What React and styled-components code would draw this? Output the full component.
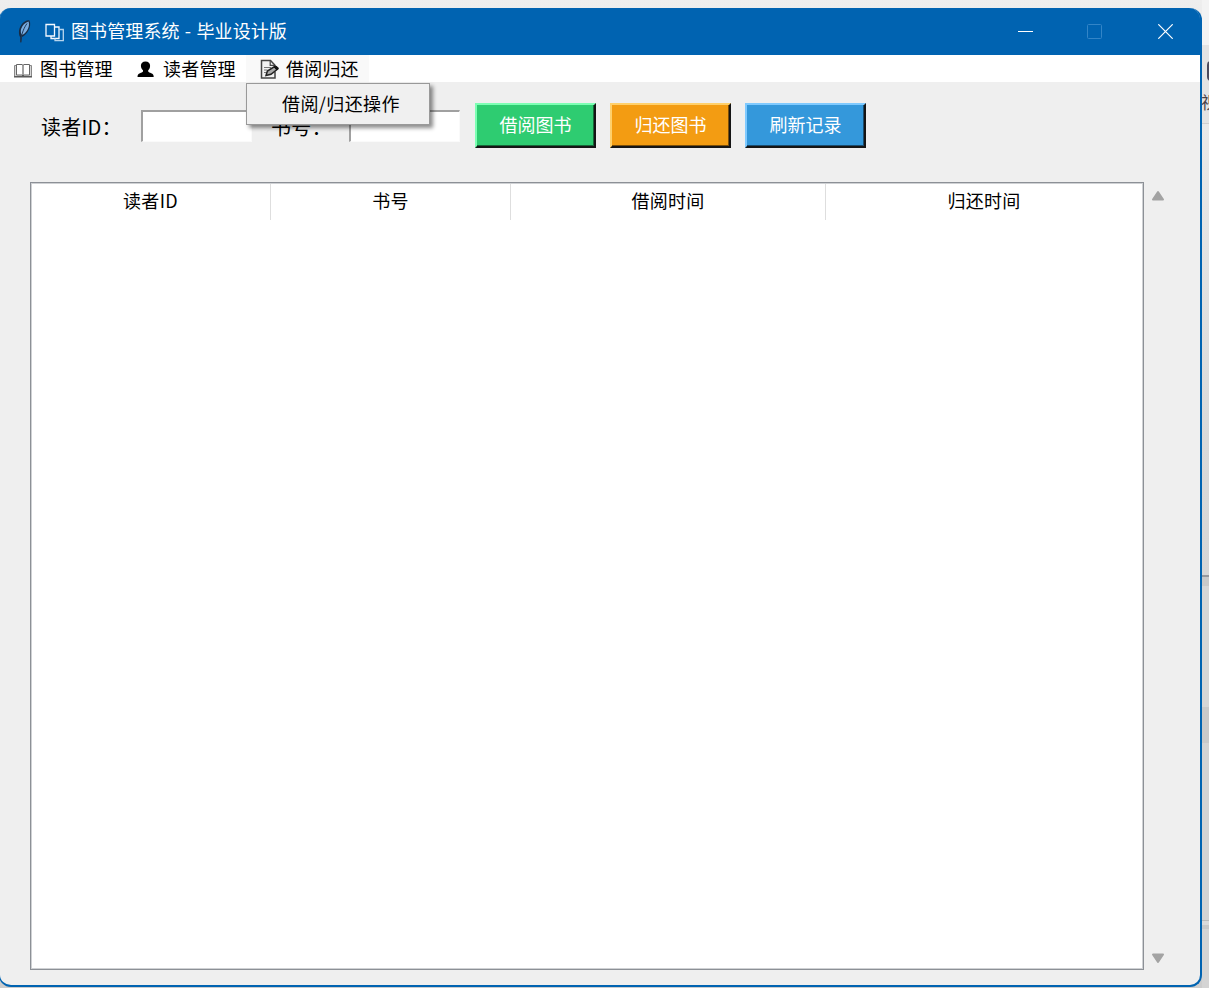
import styled, { createGlobalStyle } from "styled-components";

const COLUMNS = ["读者ID", "书号", "借阅时间", "归还时间"];

const BookIcon = () => (
  <svg width="20" height="18" viewBox="0 0 20 18" fill="none">
    <path d="M1.500 5.500v11h17v-11z" fill="#d8d8d8" stroke="#888" />
    <path d="M3.500 4.500h5.500l1 .8 1-.8h5.500v10.500h-5.500l-1 .8-1-.8H3.500z" fill="#fff" stroke="#666" />
    <path d="M10 5.300v11" stroke="#444" />
    <path d="M1 16.800h18" stroke="#555" strokeWidth="1.400" />
  </svg>
);

const PersonIcon = () => (
  <svg width="20" height="18" viewBox="0 0 20 18" fill="#000">
    <path d="M9.500 1.500c2.900 0 4.600 1.700 4.600 4.200 0 2-.9 3.600-1.900 4.500v1.300c.5.9 1.700 1.200 3 1.700 1.700.6 2.500 1.500 2.500 3.800H1.500c0-2.300.8-3.200 2.500-3.800 1.300-.5 2.500-.8 3-1.700v-1.300c-1-.9-2.100-2.500-2.100-4.500 0-2.500 1.700-4.200 4.600-4.200z" />
  </svg>
);

const MemoIcon = () => (
  <svg width="20" height="20" viewBox="0 0 20 20" fill="none" stroke="#444">
    <path d="M16 12.500V19H2.500V1.500h9l4.500 4.800" fill="#f2f2f2" strokeWidth="1.500" />
    <path d="M11.200 1.500v4.800h4.800" strokeWidth="1.200" />
    <path d="M5 8.500h7M5 11h3.500M5 13.500h2.500" stroke="#777" />
    <path d="M7 16.500l1.400-4.400 7.600-4.800 2.700 2.700-6.700 5.300z" fill="#aaa" stroke="#222" strokeWidth="1.500" />
    <path d="M15 8l2-1.200 2.500 2.500-1.800 1.600z" fill="#111" stroke="#111" />
  </svg>
);

const FeatherIcon = () => (
  <svg width="16" height="26" viewBox="0 0 16 26">
    <path
      d="M13.300 1.300c1.600 2.800 1 7-.9 10.300-1.700 3-4 5.600-6.400 6.400l-.7 5.500-1.300-.3.300-4.800C1.200 13 3.800 5.300 8.800 2.400c1.600-1 3.400-1.400 4.500-1.100z"
      fill="#182c45"
    />
    <path d="M12.500 2.500c1.300 3 0 7.400-2.200 10-1.300 1.700-2.900 3.200-4.200 3.500C3.200 13 5 5.200 12.500 2.500z" fill="#78abe0" />
    <path d="M11 4.500C8.200 8.500 5.500 14 4.700 23" fill="none" stroke="#1b3858" />
  </svg>
);

const PagesIcon = () => (
  <svg width="20" height="20" viewBox="0 0 20 20" fill="none" stroke="#f4f9ff" strokeWidth="1.300">
    <path d="M1 1.500h8.500v11.500H1z" />
    <path d="M9.500 4h4.500v11.500H6V13" />
    <path d="M14 6.500h4.300v11.200H10v-2.200" stroke="#b8d5ee" />
  </svg>
);

const MinimizeIcon = () => (
  <svg width="15" height="15" viewBox="0 0 15 15">
    <path d="M0 7.500h15" stroke="#fff" />
  </svg>
);

const MaximizeIcon = () => (
  <svg width="15" height="15" viewBox="0 0 15 15">
    <rect x=".5" y=".5" width="14" height="14" rx="1" fill="none" stroke="#3385c7" />
  </svg>
);

const CloseIcon = () => (
  <svg width="15" height="15" viewBox="0 0 15 15">
    <path d="M.3.3l14.400 14.400M14.700.3L.3 14.700" stroke="#fff" strokeWidth="1.200" />
  </svg>
);

const App = () => {
  return (
    <>
      <GlobalStyle />
      <Desktop>
        <Window>
          <TitleBar>
            <FeatherIcon />
            <PagesIcon />
            <Title>图书管理系统 - 毕业设计版</Title>
            <WindowButton>
              <MinimizeIcon />
            </WindowButton>
            <WindowButton $narrow>
              <MaximizeIcon />
            </WindowButton>
            <WindowButton $last>
              <CloseIcon />
            </WindowButton>
          </TitleBar>
          <MenuBar>
            <MenuItem>
              <BookIcon />
              图书管理
            </MenuItem>
            <MenuItem>
              <PersonIcon />
              读者管理
            </MenuItem>
            <MenuItem $active>
              <MemoIcon />
              借阅归还
              <Dropdown>借阅/归还操作</Dropdown>
            </MenuItem>
          </MenuBar>
          <Content>
            <Form>
              <Label $width={100}>读者ID：</Label>
              <Entry />
              <Label $width={78}>书号：</Label>
              <Entry />
              <Buttons>
                <Button $color="#2ecc71" $light="#7dffb4" $dark="#176638">
                  借阅图书
                </Button>
                <Button $color="#f39c12" $light="#ffd06b" $dark="#7a4e09">
                  归还图书
                </Button>
                <Button $color="#3498db" $light="#7fcaff" $dark="#1a4c6e">
                  刷新记录
                </Button>
              </Buttons>
            </Form>
            <TableArea>
              <Table>
                <TableHead>
                  {COLUMNS.map((name) => (
                    <HeadCell key={name}>{name}</HeadCell>
                  ))}
                </TableHead>
              </Table>
              <Scrollbar>
                <Arrow viewBox="0 0 14 12">
                  <path d="M7 2l5 7.500H2z" />
                </Arrow>
                <Arrow viewBox="0 0 14 12" $down>
                  <path d="M7 2l5 7.500H2z" />
                </Arrow>
              </Scrollbar>
            </TableArea>
          </Content>
        </Window>
        <Backdrop>
          <Strip $height={45} $color="#f3f3f3" />
          <Strip $height={78} $color="#e3e3e3">
            <Glyph />
            <BackText>视</BackText>
          </Strip>
          <Strip $height={1} $color="#cfcfcf" />
          <Strip $height={451} $color="linear-gradient(#e9e9e9, #d9d9d9 70%, #d6d6d6)" />
          <Strip $height={2} $color="#96989d" />
          <Strip $height={9} $color="#c9c9c9" />
          <Strip $height={121} $color="#d6d6d6" />
          <Strip $height={36} $color="#c9c9c9" />
          <Strip $height={177} $color="#d3d3d3" />
          <Strip $height={1} $color="#bababa" />
          <Strip $height={4} $color="#dadada" />
          <Strip $height={4} $color="#c8c8c8" />
          <Strip $height={59} $color="#d4d4d4" />
        </Backdrop>
      </Desktop>
    </>
  );
};

const GlobalStyle = createGlobalStyle`
  * {
    box-sizing: border-box;
  }
  body {
    margin: 0;
    overflow: hidden;
    font-family: "Noto Sans CJK SC", sans-serif;
    font-size: 18px;
    color: #000;
  }
  svg {
    flex-shrink: 0;
  }
`;

const Desktop = styled.div`
  display: flex;
  width: 1209px;
  height: 988px;
  overflow: hidden;
  background: linear-gradient(#eeeeee 0, #e8e8e8 60px, #d0d0d0 900px, #cccccc);
`;

const Window = styled.div`
  display: flex;
  flex-direction: column;
  flex-shrink: 0;
  width: 1203px;
  height: 979px;
  margin: 8px 0 0 -1px;
  border: 2px solid #0063b1;
  border-left: 1px solid #0063b1;
  border-top: none;
  border-radius: 12px;
  background: #efefef;
`;

const TitleBar = styled.div`
  display: flex;
  align-items: center;
  height: 47px;
  padding-left: 16px;
  background: #0063b1;
  border-radius: 11px 11px 0 0;
  color: #fff;

  svg:nth-child(2) {
    margin: 2px 6px 0 13px;
  }
`;

const Title = styled.div`
  flex: 1;
  height: 47px;
  line-height: 45px;
  letter-spacing: 0.12px;
  word-spacing: 1px;
  white-space: nowrap;
`;

const WindowButton = styled.div`
  display: flex;
  align-items: center;
  justify-content: center;
  width: ${(p) => (p.$narrow ? 68 : 70)}px;
  height: 47px;
  padding-left: ${(p) => (p.$last ? 2 : 0)}px;
  box-sizing: content-box;
`;

const MenuBar = styled.div`
  display: flex;
  height: 27px;
  background: #fff;
`;

const MenuItem = styled.div`
  position: relative;
  display: flex;
  align-items: center;
  gap: 7px;
  width: 123px;
  padding-left: 13px;
  line-height: 27px;
  letter-spacing: 0.2px;
  white-space: nowrap;
  background: ${(p) => (p.$active ? "#f9f9f9" : "#fff")};
`;

const Dropdown = styled.div`
  position: absolute;
  top: 28px;
  left: 0;
  z-index: 1;
  width: 184px;
  height: 42px;
  padding-left: 35px;
  line-height: 38px;
  letter-spacing: 0.4px;
  background: #f0f0f0;
  border: 1.5px solid #999;
  box-shadow: 3px 3px 4px rgba(0, 0, 0, 0.45);
`;

const Content = styled.div`
  flex: 1;
  display: flex;
  flex-direction: column;
`;

const Form = styled.div`
  display: flex;
  align-items: flex-start;
  height: 100px;
  padding: 21px 0 0 41px;
`;

const Label = styled.div`
  width: ${(p) => p.$width}px;
  height: 48px;
  line-height: 48px;
  font-size: 20px;
  letter-spacing: 0.2px;
  white-space: nowrap;
`;

const Entry = styled.div`
  width: 111px;
  height: 32px;
  margin: 7px 19px 0 0;
  background: #fff;
  border: 1px solid #fafafa;
  border-top: 2px solid #a0a0a0;
  border-left: 2px solid #a0a0a0;
`;

const Buttons = styled.div`
  display: flex;
  gap: 14px;
  margin-left: -4px;
`;

const Button = styled.div`
  width: 121px;
  height: 45px;
  line-height: 38px;
  text-align: center;
  color: #fff;
  background: ${(p) => p.$color};
  border: 2px solid;
  border-color: ${(p) => p.$light} #151515 #151515 ${(p) => p.$light};
  box-shadow: inset -1px -1px ${(p) => p.$dark};
`;

const TableArea = styled.div`
  display: flex;
  height: 788px;
  padding-left: 30px;
`;

const Table = styled.div`
  width: 1114px;
  background: #fff;
  border: 1.5px solid #8c9096;
  outline: 1px solid #cfd1d4;
  outline-offset: -2px;
`;

const TableHead = styled.div`
  display: grid;
  grid-template-columns: 240px 240px 315px 317px;
  height: 37px;
`;

const HeadCell = styled.div`
  line-height: 34px;
  text-align: center;
  letter-spacing: 0.3px;
  border-right: 1px solid #dedede;
`;

const Scrollbar = styled.div`
  display: flex;
  flex-direction: column;
  justify-content: space-between;
  padding: 8px 7px 6px;
`;

const Arrow = styled.svg`
  width: 14px;
  height: 12px;
  fill: #a3a3a3;
  stroke: #a3a3a3;
  stroke-width: 2px;
  stroke-linejoin: round;
  transform: ${(p) => (p.$down ? "rotate(180deg)" : "none")};
`;

const Backdrop = styled.div`
  width: 7px;
  overflow: hidden;
`;

const Strip = styled.div`
  height: ${(p) => p.$height}px;
  overflow: hidden;
  background: ${(p) => p.$color};
`;

const Glyph = styled.div`
  width: 16px;
  height: 20px;
  margin: 16px 0 0 5px;
  border: 2px solid #4b4a5c;
  border-radius: 4px;
`;

const BackText = styled.div`
  width: 20px;
  margin-left: -1px;
  font-size: 17px;
  line-height: 42px;
  color: #4a4046;
`;

export default App;
